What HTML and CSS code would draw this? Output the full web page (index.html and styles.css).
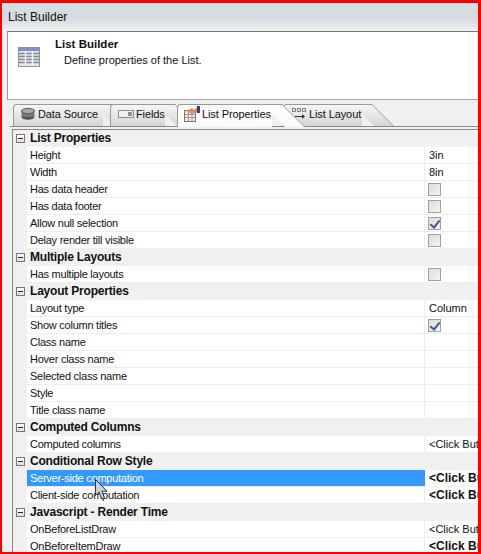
FILE: index.html
```html
<!DOCTYPE html>
<html lang="en">
<head>
<meta charset="utf-8">
<title>List Builder</title>
<link rel="stylesheet" href="styles.css">
</head>
<body>
<div class="window">
  <div class="titlebar">List Builder</div>
  <div class="banner">
    <svg class="banner-icon" width="22" height="20" viewBox="0 0 22 20">
      <rect x="0.5" y="0.5" width="21" height="19" fill="#e4e6ea" stroke="#8f939c"/>
      <rect x="1" y="1" width="20" height="3" fill="#7d8fc4"/>
      <path d="M1 6.5h20M1 9.5h20M1 12.5h20M1 15.5h20" stroke="#858892" stroke-width="1.4"/>
      <path d="M7.5 4v15M14.5 4v15" stroke="#f3f4f6" stroke-width="1.5"/>
    </svg>
    <div class="banner-text">
      <div class="banner-title">List Builder</div>
      <div class="banner-sub">Define properties of the List.</div>
    </div>
  </div>
  <div class="tabs">
    <div class="tab tab-data">
      <svg width="14" height="12" viewBox="0 0 14 12"><ellipse cx="7" cy="9" rx="6.5" ry="2.8" fill="#555"/><rect x="0.5" y="3" width="13" height="6" fill="#777"/><ellipse cx="7" cy="3" rx="6.5" ry="2.6" fill="#aaa" stroke="#555"/></svg>
      <span>Data Source</span>
    </div>
    <div class="tab tab-fields">
      <svg width="16" height="8" viewBox="0 0 16 8"><rect x="0.5" y="0.5" width="15" height="7" fill="#eef0f4" stroke="#8a8f99"/><rect x="10" y="2" width="4" height="4" fill="#8a8f99"/></svg>
      <span>Fields</span>
    </div>
    <div class="tab tab-active">
      <svg width="16" height="16" viewBox="0 0 16 16"><rect x="0.5" y="4.5" width="11" height="11" fill="#eee" stroke="#777"/><path d="M1 8.5h10M1 11.5h10M4.5 5v10M8 5v10" stroke="#999"/><path d="M3 5l5-3 2 2 3-3v5l-5 2z" fill="#d98a55"/><rect x="13" y="0" width="3" height="7" fill="#2a3f9c"/></svg>
      <span>List Properties</span>
    </div>
    <div class="tab tab-layout">
      <svg width="14" height="12" viewBox="0 0 14 12"><path d="M0.5 0.5h3v3h-3zM5.5 0.5h3v3h-3zM10.5 0.5h3v3h-3z" fill="none" stroke="#777"/><path d="M3 8.5h9" stroke="#333"/><path d="M10 6l3 2.5-3 2.5z" fill="#333"/></svg>
      <span>List Layout</span>
    </div>
  </div>
  <div class="grid">
    <div class="row group"><span class="toggle"></span><span>List Properties</span></div>
    <div class="row"><span class="name">Height</span><span class="value">3in</span></div>
    <div class="row"><span class="name">Width</span><span class="value">8in</span></div>
    <div class="row"><span class="name">Has data header</span><span class="value"><span class="check"></span></span></div>
    <div class="row"><span class="name">Has data footer</span><span class="value"><span class="check"></span></span></div>
    <div class="row"><span class="name">Allow null selection</span><span class="value"><span class="check checked"></span></span></div>
    <div class="row"><span class="name">Delay render till visible</span><span class="value"><span class="check"></span></span></div>
    <div class="row group"><span class="toggle"></span><span>Multiple Layouts</span></div>
    <div class="row"><span class="name">Has multiple layouts</span><span class="value"><span class="check"></span></span></div>
    <div class="row group"><span class="toggle"></span><span>Layout Properties</span></div>
    <div class="row"><span class="name">Layout type</span><span class="value">Column</span></div>
    <div class="row"><span class="name">Show column titles</span><span class="value"><span class="check checked"></span></span></div>
    <div class="row"><span class="name">Class name</span><span class="value"></span></div>
    <div class="row"><span class="name">Hover class name</span><span class="value"></span></div>
    <div class="row"><span class="name">Selected class name</span><span class="value"></span></div>
    <div class="row"><span class="name">Style</span><span class="value"></span></div>
    <div class="row"><span class="name">Title class name</span><span class="value"></span></div>
    <div class="row group"><span class="toggle"></span><span>Computed Columns</span></div>
    <div class="row"><span class="name">Computed columns</span><span class="value">&lt;Click Button&gt;</span></div>
    <div class="row group"><span class="toggle"></span><span>Conditional Row Style</span></div>
    <div class="row selected"><span class="name">Server-side computation</span><span class="value strong">&lt;Click Button&gt;</span></div>
    <div class="row"><span class="name">Client-side computation</span><span class="value strong">&lt;Click Button&gt;</span></div>
    <div class="row group"><span class="toggle"></span><span>Javascript - Render Time</span></div>
    <div class="row"><span class="name">OnBeforeListDraw</span><span class="value">&lt;Click Button&gt;</span></div>
    <div class="row"><span class="name">OnBeforeItemDraw</span><span class="value strong">&lt;Click Button&gt;</span></div>
    <svg class="cursor" width="13" height="21" viewBox="0 0 13 21"><path d="M0.5 0.5v16l3.5-3.5 2.7 7 2.8-1.2-2.7-6.6h5.2z" fill="#c9d0d8" stroke="#30343d"/></svg>
  </div>
</div>
</body>
</html>
```
FILE: styles.css
```css
html, body { margin: 0; padding: 0; }
body { width: 481px; height: 554px; overflow: hidden; font-family: "Liberation Sans", Arial, sans-serif; font-size: 11px; color: #111; }
.window { box-sizing: border-box; width: 481px; height: 554px; border: solid #fe0000; border-width: 3px 3px 2px 2px; background: #f0f0f0; display: flex; flex-direction: column; overflow: hidden; }
.titlebar { height: 28px; line-height: 28px; padding-left: 6px; flex: none; font-size: 12px; background: linear-gradient(#d6dde3, #d4dbe1 55%, #f0f1f0); }
.banner { flex: none; box-sizing: border-box; height: 69px; margin-left: 5px; background: #fff; border-top: 1px solid #777; border-left: 1px solid #999; border-bottom: 1px solid #aaa; display: flex; padding: 4px 0 0 10px; }
.banner-icon { margin-top: 11px; flex: none; }
.banner-text { margin-left: 15px; }
.banner-title { font-weight: bold; font-size: 11.5px; line-height: 16px; }
.banner-sub { padding-left: 9px; line-height: 16px; }
.tabs { flex: none; height: 26px; margin-left: 8px; padding-left: 3px; display: flex; align-items: flex-end; border-bottom: 1px solid #888; isolation: isolate; }
.tab { box-sizing: border-box; height: 22px; padding: 0 0 3px 7px; display: flex; align-items: center; gap: 3px; border: 1px solid #999; border-right: 0; border-bottom: 0; border-radius: 4px 0 0 0; background: linear-gradient(#f6f6f6, #d5d5d5); position: relative; letter-spacing: -0.1px; white-space: nowrap; }
.tab svg { flex: none; }
.tab::after { content: ""; position: absolute; top: -1px; bottom: 0; right: -10px; width: 20px; box-sizing: border-box; border: 1px solid #999; border-left: 0; border-bottom: 0; background: linear-gradient(#f6f6f6, #d5d5d5); transform: skewX(45deg); transform-origin: top left; z-index: -1; }
.tab-data { width: 90px; margin-right: 7px; }
.tab-fields { width: 55px; margin-right: 12px; gap: 2px; }
.tab-active { width: 95px; margin-right: 11px; height: 23px; margin-bottom: -1px; padding: 0 0 4px 6px; gap: 2px; background: #fbfbfb; z-index: 1; }
.tab-active::after { background: #fbfbfb; }
.tab-layout { width: 79px; padding-left: 8px; }
.grid { flex: none; position: relative; margin-left: 10px; margin-top: 2px; width: 500px; border-top: 1px solid #888; border-left: 1px solid #888; background: #f0f0f0; }
.row { display: flex; height: 17px; line-height: 16px; box-sizing: border-box; margin-left: 14px; background: #fff; border-bottom: 1px solid #eee; }
.group { margin-left: 0; padding: 0 0 1px 3px; background: #f0f0f0; border-bottom: 0; font-weight: bold; font-size: 12px; letter-spacing: -0.2px; align-items: center; }
.toggle { box-sizing: border-box; width: 9px; height: 9px; margin-right: 5px; border: 1px solid #777; background: linear-gradient(#fff, #ddd); position: relative; flex: none; }
.toggle::after { content: ""; position: absolute; left: 1px; top: 3px; width: 5px; height: 1px; background: #222; }
.name { box-sizing: border-box; width: 398px; flex: none; padding-left: 3px; border-right: 1px solid #eee; white-space: nowrap; letter-spacing: -0.25px; }
.value { padding-left: 4px; white-space: nowrap; display: flex; align-items: center; }
.strong { font-weight: bold; font-size: 12px; }
.selected .name { background: #3399ff; color: #fff; border-right: 0; }
.check { box-sizing: border-box; width: 13px; height: 13px; margin-left: -1px; border: 1px solid #a0a1a1; background: linear-gradient(135deg, #dcdcdc, #f4f4f4); position: relative; display: block; }
.checked::after { content: ""; position: absolute; left: 3px; top: 0; width: 4px; height: 8px; border: solid #3c5a9e; border-width: 0 2px 2px 0; transform: rotate(38deg); }
.cursor { position: absolute; left: 82px; top: 349px; }
```
